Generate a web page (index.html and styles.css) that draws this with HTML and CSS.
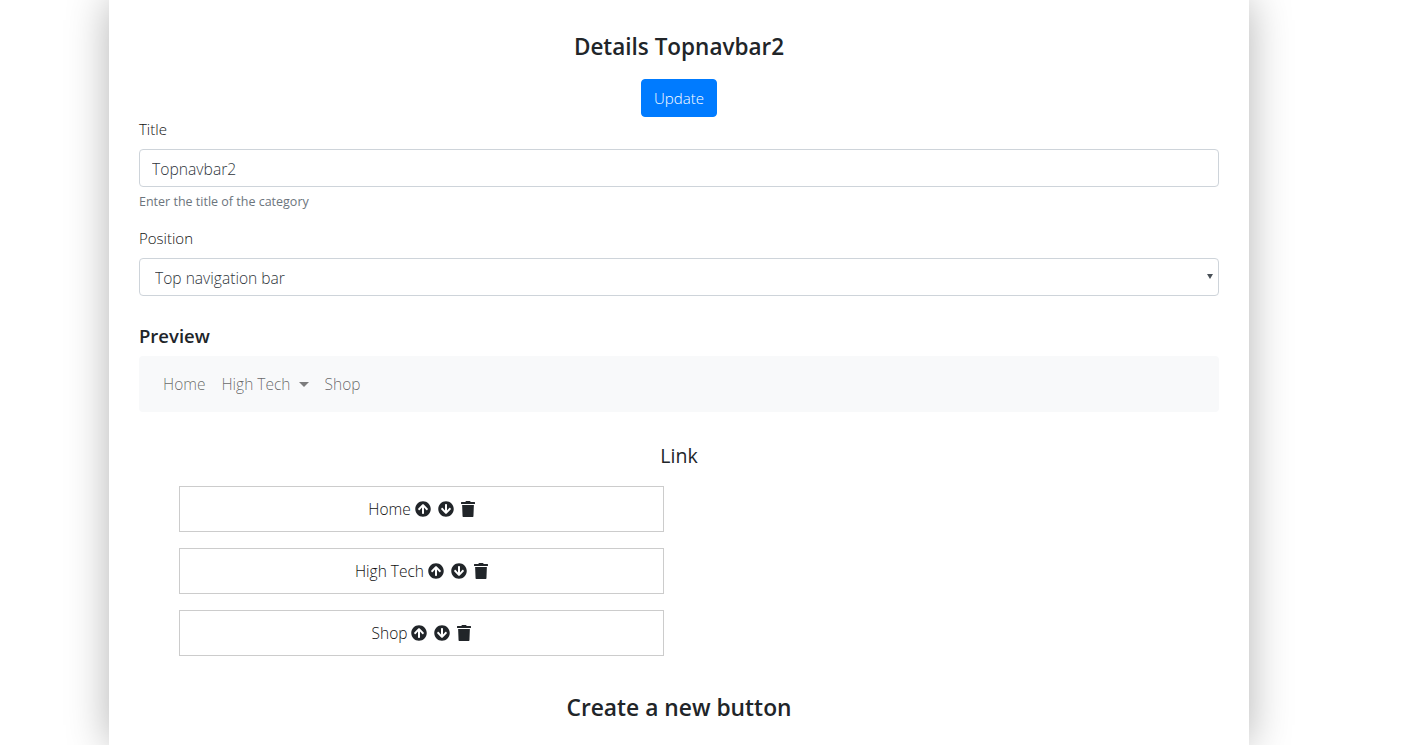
FILE: index.html
```html
<!DOCTYPE html>
<html>
<head>
	<meta charset="utf-8">
	<title>Details Topnavbar2</title>
	<link rel="stylesheet" href="styles.css">
</head>

<body>
	<div class="page">
		<h3 class="page-title">Details Topnavbar2</h3>
		<div class="update-wrap">
			<button type="button" class="button-update">Update</button>
		</div>
		<div class="form-group">
			<label class="field-label">Title</label>
			<input type="text" class="field" value="Topnavbar2">
			<small class="field-help">Enter the title of the category</small>
		</div>
		<div class="form-group">
			<label class="field-label">Position</label>
			<div class="select-wrap">
				<select class="field field-select">
					<option>Top navigation bar</option>
				</select>
			</div>
		</div>
		<h5 class="preview-title">Preview</h5>
		<nav class="navbar">
			<a class="nav-link">Home</a>
			<a class="nav-link">High Tech <span class="caret"></span></a>
			<a class="nav-link">Shop</a>
		</nav>
		<h5 class="link-title">Link</h5>
		<div class="link-list">
			<div class="link-row">
				<span class="link-name">Home</span>
				<svg class="icon" viewBox="0 0 512 512"><path d="M8 256C8 119 119 8 256 8s248 111 248 248-111 248-248 248S8 393 8 256zm143.6 28.9l72.4-75.5V392c0 13.3 10.7 24 24 24h16c13.3 0 24-10.7 24-24V209.4l72.4 75.5c9.3 9.7 24.8 9.9 34.3.4l10.9-11c9.4-9.4 9.4-24.6 0-33.9L273 107.7c-9.4-9.4-24.6-9.4-33.9 0L106.3 240.4c-9.4 9.4-9.4 24.6 0 33.9l10.9 11c9.6 9.5 25.1 9.3 34.4-.4z"/></svg>
				<svg class="icon" viewBox="0 0 512 512"><path d="M504 256c0 137-111 248-248 248S8 393 8 256 119 8 256 8s248 111 248 248zm-143.6-28.9L288 302.6V120c0-13.3-10.7-24-24-24h-16c-13.3 0-24 10.7-24 24v182.6l-72.4-75.5c-9.3-9.7-24.8-9.9-34.3-.4l-10.9 11c-9.4 9.4-9.4 24.6 0 33.9L239 404.3c9.4 9.4 24.6 9.4 33.9 0l132.7-132.7c9.4-9.4 9.4-24.6 0-33.9l-10.9-11c-9.5-9.5-25-9.3-34.3.4z"/></svg>
				<svg class="icon icon-trash" viewBox="0 0 448 512"><path d="M432 32H312l-9.4-18.7A24 24 0 0 0 281.1 0H166.8a23.72 23.72 0 0 0-21.4 13.3L136 32H16A16 16 0 0 0 0 48v32a16 16 0 0 0 16 16h416a16 16 0 0 0 16-16V48a16 16 0 0 0-16-16zM36 128H412L398 490a22 22 0 0 1-22 22H72a22 22 0 0 1-22-22z"/></svg>
			</div>
			<div class="link-row">
				<span class="link-name">High Tech</span>
				<svg class="icon" viewBox="0 0 512 512"><path d="M8 256C8 119 119 8 256 8s248 111 248 248-111 248-248 248S8 393 8 256zm143.6 28.9l72.4-75.5V392c0 13.3 10.7 24 24 24h16c13.3 0 24-10.7 24-24V209.4l72.4 75.5c9.3 9.7 24.8 9.9 34.3.4l10.9-11c9.4-9.4 9.4-24.6 0-33.9L273 107.7c-9.4-9.4-24.6-9.4-33.9 0L106.3 240.4c-9.4 9.4-9.4 24.6 0 33.9l10.9 11c9.6 9.5 25.1 9.3 34.4-.4z"/></svg>
				<svg class="icon" viewBox="0 0 512 512"><path d="M504 256c0 137-111 248-248 248S8 393 8 256 119 8 256 8s248 111 248 248zm-143.6-28.9L288 302.6V120c0-13.3-10.7-24-24-24h-16c-13.3 0-24 10.7-24 24v182.6l-72.4-75.5c-9.3-9.7-24.8-9.9-34.3-.4l-10.9 11c-9.4 9.4-9.4 24.6 0 33.9L239 404.3c9.4 9.4 24.6 9.4 33.9 0l132.7-132.7c9.4-9.4 9.4-24.6 0-33.9l-10.9-11c-9.5-9.5-25-9.3-34.3.4z"/></svg>
				<svg class="icon icon-trash" viewBox="0 0 448 512"><path d="M432 32H312l-9.4-18.7A24 24 0 0 0 281.1 0H166.8a23.72 23.72 0 0 0-21.4 13.3L136 32H16A16 16 0 0 0 0 48v32a16 16 0 0 0 16 16h416a16 16 0 0 0 16-16V48a16 16 0 0 0-16-16zM36 128H412L398 490a22 22 0 0 1-22 22H72a22 22 0 0 1-22-22z"/></svg>
			</div>
			<div class="link-row">
				<span class="link-name">Shop</span>
				<svg class="icon" viewBox="0 0 512 512"><path d="M8 256C8 119 119 8 256 8s248 111 248 248-111 248-248 248S8 393 8 256zm143.6 28.9l72.4-75.5V392c0 13.3 10.7 24 24 24h16c13.3 0 24-10.7 24-24V209.4l72.4 75.5c9.3 9.7 24.8 9.9 34.3.4l10.9-11c9.4-9.4 9.4-24.6 0-33.9L273 107.7c-9.4-9.4-24.6-9.4-33.9 0L106.3 240.4c-9.4 9.4-9.4 24.6 0 33.9l10.9 11c9.6 9.5 25.1 9.3 34.4-.4z"/></svg>
				<svg class="icon" viewBox="0 0 512 512"><path d="M504 256c0 137-111 248-248 248S8 393 8 256 119 8 256 8s248 111 248 248zm-143.6-28.9L288 302.6V120c0-13.3-10.7-24-24-24h-16c-13.3 0-24 10.7-24 24v182.6l-72.4-75.5c-9.3-9.7-24.8-9.9-34.3-.4l-10.9 11c-9.4 9.4-9.4 24.6 0 33.9L239 404.3c9.4 9.4 24.6 9.4 33.9 0l132.7-132.7c9.4-9.4 9.4-24.6 0-33.9l-10.9-11c-9.5-9.5-25-9.3-34.3.4z"/></svg>
				<svg class="icon icon-trash" viewBox="0 0 448 512"><path d="M432 32H312l-9.4-18.7A24 24 0 0 0 281.1 0H166.8a23.72 23.72 0 0 0-21.4 13.3L136 32H16A16 16 0 0 0 0 48v32a16 16 0 0 0 16 16h416a16 16 0 0 0 16-16V48a16 16 0 0 0-16-16zM36 128H412L398 490a22 22 0 0 1-22 22H72a22 22 0 0 1-22-22z"/></svg>
			</div>
		</div>
		<h3 class="create-title">Create a new button</h3>
	</div>
</body>

</html>
```

FILE: styles.css
```css
html, body{
	margin: 0;
	height: 100%;
	overflow: hidden;
	background-color: white;
}

body{
	font-family: "Open Sans", "Noto Sans", sans-serif;
	font-weight: 300;
	font-size: 16px;
	line-height: 1.5;
	color: #212529;
}

.page{
	box-sizing: border-box;
	width: 1140px;
	height: 745px;
	margin-left: 109px;
	padding: 30px 30px 0 30px;
	overflow: hidden;
	background-color: white;
	box-shadow: 0 0 40px rgba(0,0,0,0.3);
}

.page-title{
	margin: 0 0 15px 0;
	text-align: center;
	font-size: 22.5px;
	font-weight: 600;
	line-height: 34px;
}

.update-wrap{
	text-align: center;
	height: 38px;
}

.button-update{
	height: 38px;
	padding: 0 12px;
	font-family: inherit;
	font-weight: 300;
	font-size: 15px;
	color: white;
	background-color: #007bff;
	border: 1px solid #007bff;
	border-radius: 4px;
}

.form-group{
	margin-bottom: 14px;
}

.field-label{
	display: block;
	margin-bottom: 8px;
	font-weight: 300;
	font-size: 15px;
	line-height: 24px;
	color: #111;
}

.field{
	display: block;
	box-sizing: border-box;
	width: 100%;
	height: 38px;
	padding: 8px 12px 6px 12px;
	font-family: inherit;
	font-weight: 300;
	font-size: 15.7px;
	color: #2f353b;
	background-color: white;
	border: 1px solid #ced4da;
	border-radius: 4px;
}

.select-wrap{
	position: relative;
}

.select-wrap::after{
	content: "";
	position: absolute;
	top: 16px;
	right: 6px;
	border-top: 5px solid #495057;
	border-left: 3px solid transparent;
	border-right: 3px solid transparent;
}

.field-select{
	padding-left: 15px;
	font-size: 15.6px;
	appearance: none;
	-webkit-appearance: none;
}

.field-help{
	display: block;
	margin-top: 5px;
	font-size: 12.5px;
	font-weight: 400;
	line-height: 20px;
	color: #6c757d;
}

.preview-title{
	margin: 28px 0 8px 0;
	font-size: 18.5px;
	font-weight: 600;
	line-height: 24px;
}

.navbar{
	display: flex;
	align-items: center;
	height: 56px;
	padding: 0 16px;
	background-color: #f8f9fa;
	border-radius: 4px;
}

.nav-link{
	padding: 2px 8px 0 8px;
	font-size: 15.5px;
	color: rgba(0,0,0,0.6);
}

.caret{
	display: inline-block;
	margin-left: 4px;
	vertical-align: 3px;
	border-top: 5px solid rgba(0,0,0,0.5);
	border-left: 5px solid transparent;
	border-right: 5px solid transparent;
}

.link-title{
	margin: 30px 0 16px 0;
	text-align: center;
	font-size: 19.5px;
	font-weight: 400;
	line-height: 28px;
}

.link-list{
	display: flex;
	flex-direction: column;
	gap: 16px;
	width: 485px;
	margin-left: 40px;
}

.link-row{
	display: flex;
	justify-content: center;
	align-items: center;
	gap: 4px;
	box-sizing: border-box;
	height: 46px;
	font-size: 15.5px;
	border: 1px solid #cccccc;
}

.link-name{
	padding-top: 2px;
	color: #111;
}

.icon{
	width: 16px;
	height: 16px;
	margin-right: 3px;
	fill: #212529;
}

.icon-trash{
	width: 14px;
	margin-right: 0;
}

.create-title{
	margin: 36px 0 0 0;
	text-align: center;
	font-size: 22.8px;
	font-weight: 600;
	line-height: 32px;
}
```
